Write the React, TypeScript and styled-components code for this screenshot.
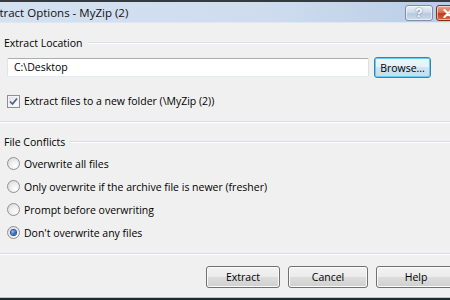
import React from "react";
import styled, { createGlobalStyle } from "styled-components";

const Global = createGlobalStyle`
  html, body { margin: 0; padding: 0; width: 450px; height: 300px; overflow: hidden; background: #1f2a33; }
  #root { width: 450px; height: 300px; }
  * { box-sizing: border-box; }
`;

const FONT = `"Open Sans", "Noto Sans", "Liberation Sans", sans-serif`;

const Window = styled.div`
  width: 450px;
  height: 300px;
  display: flex;
  flex-direction: column;
  overflow: hidden;
  font-family: ${FONT};
  font-size: 10.5px;
  color: #000;
  background: #f0f0f0;
  border-top: 2px solid #353a40;
`;

const TitleBar = styled.div`
  height: 21px;
  display: flex;
  align-items: flex-start;
  background: linear-gradient(90deg, #d3e1f1 0%, #cedcee 60%, #b9cde6 100%);
  border-bottom: 1px solid #dfe7f0;
  overflow: hidden;
  flex-shrink: 0;
`;

const Title = styled.div`
  flex: 1;
  margin-left: -13px;
  padding-top: 3px;
  font-size: 11.5px;
  line-height: 15px;
  color: #111;
  white-space: nowrap;
`;

const Caption = styled.div`
  display: flex;
  gap: 3px;
  margin-top: 3px;
  margin-right: -29px;
  flex-shrink: 0;
`;

const CapButton = styled.div<{ $danger?: boolean; $w: number }>`
  width: ${(p) => p.$w}px;
  height: 16px;
  border-radius: 3px;
  border: 1px solid ${(p) => (p.$danger ? "#8a2a1c" : "#7d8fa8")};
  background: ${(p) =>
    p.$danger
      ? "linear-gradient(#e8a493 0%, #d66f56 45%, #c0391c 55%, #d86a4c 100%)"
      : "linear-gradient(#e9f0f8 0%, #cfdbea 45%, #b9c9de 55%, #cbd9ea 100%)"};
  box-shadow: inset 0 0 0 1px rgba(255, 255, 255, 0.55);
  display: flex;
  align-items: center;
  justify-content: ${(p) => (p.$danger ? "flex-start" : "center")};
  padding-left: ${(p) => (p.$danger ? "6px" : "0")};
  color: #fff;
  font-family: "Liberation Sans", sans-serif;
  font-weight: bold;
  font-size: 12px;
  text-shadow: 0 0 2px #4b5e78;
`;

const Client = styled.div`
  flex: 1;
  display: flex;
  flex-direction: column;
`;

const SectionHeader = styled.div<{ $mt: number }>`
  display: flex;
  align-items: center;
  gap: 5px;
  height: 16px;
  margin-top: ${(p) => p.$mt}px;
  padding-left: 4px;
  white-space: nowrap;
`;

const Rule = styled.div`
  flex: 1;
  height: 2px;
  border-top: 1px solid #d9dde2;
  border-bottom: 1px solid #ffffff;
`;

const Divider = styled.div<{ $mt: number }>`
  height: 2px;
  margin-top: ${(p) => p.$mt}px;
  border-top: 1px solid #d9dde2;
  border-bottom: 1px solid #ffffff;
  flex-shrink: 0;
`;

const InputRow = styled.div`
  display: flex;
  align-items: center;
  gap: 5px;
  margin-top: 6px;
  padding-left: 7px;
  height: 21px;
`;

const TextBox = styled.div`
  width: 362px;
  height: 19px;
  background: #fff;
  border: 1px solid;
  border-color: #abadb3 #dbdfe6 #e3e9ef #e2e3ea;
  border-radius: 2px;
  padding-left: 6px;
  line-height: 17px;
`;

const Button = styled.div<{ $w: number; $focus?: boolean }>`
  width: ${(p) => p.$w}px;
  height: ${(p) => (p.$focus ? 21 : 22)}px;
  flex-shrink: 0;
  border: 1px solid ${(p) => (p.$focus ? "#3c7fb1" : "#707070")};
  border-radius: 3px;
  background: ${(p) =>
    p.$focus
      ? "linear-gradient(#eef7fb 0%, #e3f1f8 50%, #cde5f0 50%, #c3dfec 100%)"
      : "linear-gradient(#f2f2f2 0%, #ebebeb 50%, #dddddd 50%, #cfcfcf 100%)"};
  box-shadow: ${(p) =>
    p.$focus ? "inset 0 0 0 1px #68cdf2" : "inset 0 0 0 1px #fbfbfb"};
  display: flex;
  align-items: center;
  justify-content: center;
  white-space: nowrap;
  overflow: hidden;
`;

const CheckRow = styled.div`
  display: flex;
  align-items: center;
  gap: 4px;
  height: 16px;
  margin-top: 15px;
  padding-left: 7px;
  white-space: nowrap;
`;

const Box = styled.div`
  width: 13px;
  height: 13px;
  border: 1px solid #8e8f8f;
  background: linear-gradient(135deg, #dcdcdc 0%, #f4f4f4 60%, #ffffff 100%);
  box-shadow: inset 0 0 0 1px #f4f4f4;
  display: flex;
  align-items: center;
  justify-content: center;
  flex-shrink: 0;
`;

const RadioList = styled.div`
  display: flex;
  flex-direction: column;
  margin-top: 2px;
`;

const RadioRow = styled.div`
  display: flex;
  align-items: center;
  gap: 4px;
  height: 23px;
  padding-left: 7px;
  white-space: nowrap;
`;

const RadioCircle = styled.div`
  width: 13px;
  height: 13px;
  border-radius: 50%;
  border: 1px solid #8f9191;
  background: radial-gradient(circle at 65% 70%, #ffffff 0%, #ececec 50%, #d2d2d2 100%);
  display: flex;
  align-items: center;
  justify-content: center;
  flex-shrink: 0;
`;

const Dot = styled.div`
  width: 5px;
  height: 5px;
  border-radius: 50%;
  background: radial-gradient(circle at 35% 35%, #9fc3f5 0%, #2a64c8 55%, #163e8e 100%);
  box-shadow: 0 0 0 1px #2a4f96;
`;

const ButtonRow = styled.div`
  display: flex;
  justify-content: flex-end;
  gap: 8px;
  margin-top: 11px;
  margin-right: -6px;
`;

const Spacer = styled.div`
  flex: 1;
`;

const BottomEdge = styled.div`
  height: 3px;
  flex-shrink: 0;
  border-top: 1px solid #8fd3ec;
  background: #1e2b35;
`;

const options = [
  "Overwrite all files",
  "Only overwrite if the archive file is newer (fresher)",
  "Prompt before overwriting",
  "Don't overwrite any files",
];

export default function App() {
  return (
    <>
      <Global />
      <Window>
        <TitleBar>
          <Title>Extract Options - MyZip (2)</Title>
          <Caption>
            <CapButton $w={28}>?</CapButton>
            <CapButton $w={43} $danger>
              <svg width="10" height="9" viewBox="0 0 10 9">
                <path
                  d="M1.5 1 L8.5 8 M8.5 1 L1.5 8"
                  stroke="#ffffff"
                  strokeWidth="2.2"
                  strokeLinecap="round"
                />
              </svg>
            </CapButton>
          </Caption>
        </TitleBar>
        <Client>
          <SectionHeader $mt={12}>
            <span>Extract Location</span>
            <Rule />
          </SectionHeader>
          <InputRow>
            <TextBox>C:\Desktop</TextBox>
            <Button $w={57} $focus>
              Browse...
            </Button>
          </InputRow>
          <CheckRow>
            <Box>
              <svg width="9" height="9" viewBox="0 0 9 9">
                <path
                  d="M1 4.5 L3.5 7 L8 1.5"
                  fill="none"
                  stroke="#4a5d95"
                  strokeWidth="1.7"
                />
              </svg>
            </Box>
            <span>Extract files to a new folder (\MyZip (2))</span>
          </CheckRow>
          <Divider $mt={12} />
          <SectionHeader $mt={11}>
            <span>File Conflicts</span>
            <Rule />
          </SectionHeader>
          <RadioList>
            {options.map((o, i) => (
              <RadioRow key={o}>
                <RadioCircle>{i === 3 && <Dot />}</RadioCircle>
                <span>{o}</span>
              </RadioRow>
            ))}
          </RadioList>
          <Divider $mt={9} />
          <ButtonRow>
            <Button $w={74}>Extract</Button>
            <Button $w={80}>Cancel</Button>
            <Button $w={80}>Help</Button>
          </ButtonRow>
          <Spacer />
        </Client>
        <BottomEdge />
      </Window>
    </>
  );
}
